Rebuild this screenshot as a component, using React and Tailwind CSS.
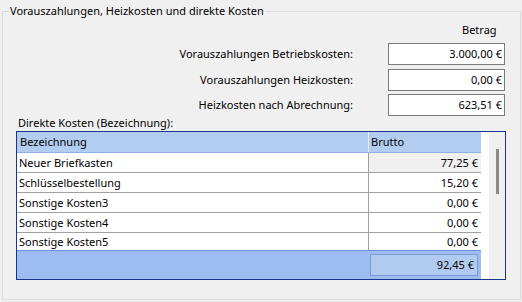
const betrag = [
  { label: "Vorauszahlungen Betriebskosten:", value: "3.000,00 €", mt: "mt-[5px]" },
  { label: "Vorauszahlungen Heizkosten:", value: "0,00 €", mt: "mt-[4px]" },
  { label: "Heizkosten nach Abrechnung:", value: "623,51 €", mt: "mt-[3px]" },
];

const kosten = [
  { name: "Neuer Briefkasten", brutto: "77,25 €", active: true },
  { name: "Schlüsselbestellung", brutto: "15,20 €" },
  { name: "Sonstige Kosten3", brutto: "0,00 €" },
  { name: "Sonstige Kosten4", brutto: "0,00 €" },
  { name: "Sonstige Kosten5", brutto: "0,00 €", last: true },
];

const App = () => {
  return (
    <div className="w-[522px] h-[302px] bg-[#f0f0f0] pt-[11px] pl-[2px] font-['Noto_Sans',sans-serif] text-[11px] text-black overflow-hidden">
      <div className="relative w-[519px] h-[289px] border border-[#dcdcdc]">
        <span className="absolute left-[6px] top-[-9px] px-[1px] bg-[#f0f0f0] leading-[16px]">
          Vorauszahlungen, Heizkosten und direkte Kosten
        </span>

        <div className="mt-[10px] h-[16px] leading-[16px] pl-[459px]">Betrag</div>

        {betrag.map((r) => (
          <div key={r.label} className={`flex items-center ${r.mt}`}>
            <div className="w-[350px] text-right leading-[16px]">{r.label}</div>
            <div className="ml-[35px] w-[117px] h-[22px] border border-[#7a7a7a] bg-white text-right pr-[2px] leading-[20px]">
              {r.value}
            </div>
          </div>
        ))}

        <div className="pl-[15px] leading-[14px] h-[14px]">Direkte Kosten (Bezeichnung):</div>

        <div className="ml-[13px] mt-[1px] w-[490px] h-[149px] border border-[#17358c] flex">
          <div className="w-[464px] flex flex-col">
            <div className="flex h-[21px] bg-[#b3cdf0] border-b border-[#8fb0e4] leading-[20px]">
              <div className="w-[352px] pl-[3px] border-r border-[#e6eefa]">Bezeichnung</div>
              <div className="flex-1 pl-[2px]">Brutto</div>
            </div>
            {kosten.map((k) => (
              <div
                key={k.name}
                className={`flex bg-white ${k.last ? "h-[17px] leading-[17px]" : "h-[20px] leading-[19px] border-b border-[#a0a0a0]"}`}
              >
                <div className="w-[352px] pl-[2px] border-r border-[#a0a0a0]">{k.name}</div>
                <div className={`flex-1 text-right pr-[3px] ${k.active ? "bg-[#f0f0f0]" : ""}`}>{k.brutto}</div>
              </div>
            ))}
            <div className="flex-1 bg-[#9dbcf2] border-t border-[#6b93dc] flex items-center">
              <div className="ml-[353px] w-[108px] h-[22px] bg-[#b0cbef] border border-[#7a9ad8] text-right pr-[3px] leading-[20px]">
                92,45 €
              </div>
            </div>
          </div>
          <div className="flex-1 flex">
            <div className="w-[8px] bg-white" />
            <div className="flex-1 bg-[#f0f0f0] pt-[17px] pl-[7px]">
              <div className="w-[3px] h-[45px] bg-[#8a8a8a]" />
            </div>
          </div>
        </div>
      </div>
    </div>
  );
};

export default App;
